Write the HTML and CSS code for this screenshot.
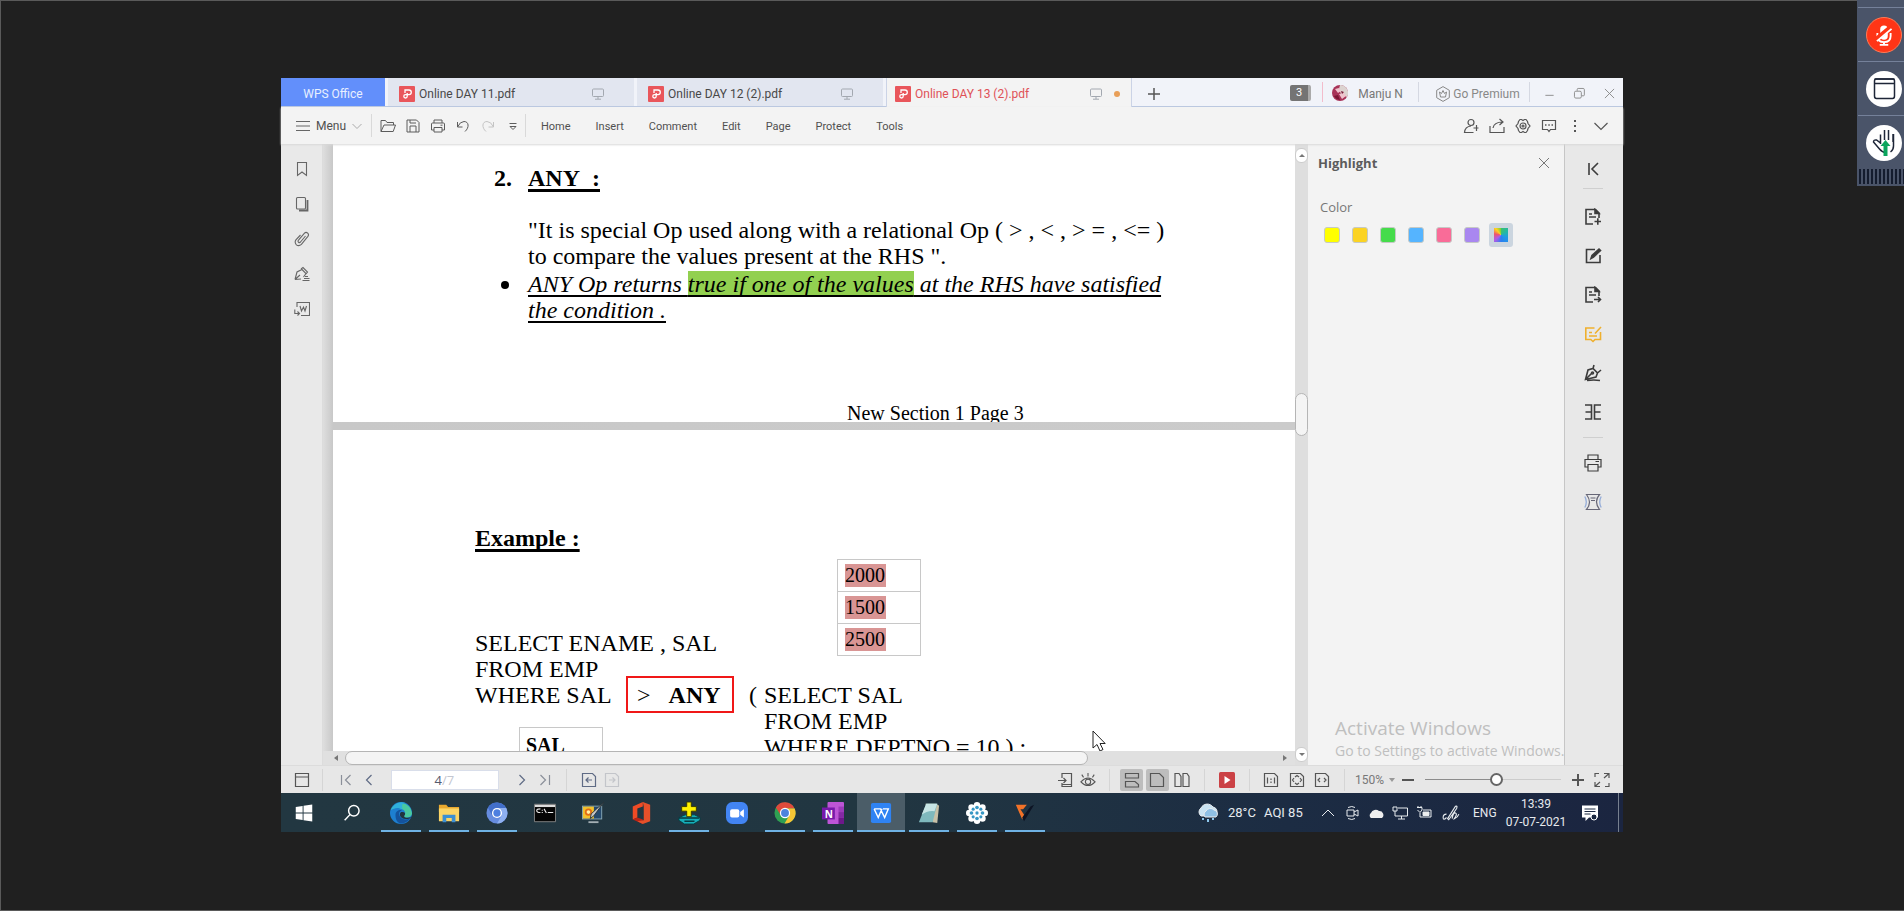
FILE: index.html
```html
<!DOCTYPE html>
<html lang="en">
<head>
<meta charset="utf-8">
<title>Online DAY 13 (2).pdf - WPS Office</title>
<link rel="stylesheet" href="styles.css">
</head>
<body>
<div class="stage">
<div class="desktop">

<header class="tabbar">
  <button class="home-tab">WPS Office</button>
  <button class="tab"><svg class="pdf" viewBox="0 0 16 16"><rect width="16" height="16" rx="1" fill="#e9565b"/><path d="M6 7V4h4a2.300 2.300 0 0 1 0 4.600H6.500a1.700 1.700 0 1 0 1.700 1.700V7" fill="none" stroke="#fff" stroke-width="1.300"/></svg><span>Online DAY 11.pdf</span><svg class="mon" viewBox="0 0 12 12"><rect x=".5" y="1" width="11" height="7.500" rx="1"/><path d="M6 8.500V11M3 11.200h6"/></svg></button>
  <button class="tab"><svg class="pdf" viewBox="0 0 16 16"><rect width="16" height="16" rx="1" fill="#e9565b"/><path d="M6 7V4h4a2.300 2.300 0 0 1 0 4.600H6.500a1.700 1.700 0 1 0 1.700 1.700V7" fill="none" stroke="#fff" stroke-width="1.300"/></svg><span>Online DAY 12 (2).pdf</span><svg class="mon" viewBox="0 0 12 12"><rect x=".5" y="1" width="11" height="7.500" rx="1"/><path d="M6 8.500V11M3 11.200h6"/></svg></button>
  <button class="tab active"><svg class="pdf" viewBox="0 0 16 16"><rect width="16" height="16" rx="1" fill="#e9565b"/><path d="M6 7V4h4a2.300 2.300 0 0 1 0 4.600H6.500a1.700 1.700 0 1 0 1.700 1.700V7" fill="none" stroke="#fff" stroke-width="1.300"/></svg><span>Online DAY 13 (2).pdf</span><svg class="mon" viewBox="0 0 12 12"><rect x=".5" y="1" width="11" height="7.500" rx="1"/><path d="M6 8.500V11M3 11.200h6"/></svg><i class="dot"></i></button>
  <button class="plus" aria-label="New tab"><svg width="12" height="12" viewBox="0 0 12 12"><path d="M6 0v12M0 6h12" stroke="#555" stroke-width="1.500"/></svg></button>
  <div class="account">
    <span class="count">3</span>
    <i class="sep pink"></i>
    <svg class="avatar" viewBox="0 0 16 16"><circle cx="8" cy="8" r="8" fill="#a83358"/><path d="M8 0a8 8 0 0 1 7 12L9 9 7 4z" fill="#dcd3d0"/><path d="M3 4l4-1 2 3-3 2zM7 9l5-1 2 3-4 3z" fill="#efc3cd"/><path d="M2 11l4-1 2 5a8 8 0 0 1-6-4zM9 6l3 1-2 2z" fill="#7b1734"/></svg>
    <button class="user">Manju N</button>
    <i class="sep"></i>
    <button class="premium"><svg width="14" height="16" viewBox="0 0 14 16" fill="none" stroke="#888"><path d="M7 .6l6.300 3.700v7.400L7 15.400.7 11.700V4.300z"/><path d="M3.500 6l1 5h5l1-5-2 1.500L7 4.500 5.500 7.500z"/></svg><span>Go Premium</span></button>
    <i class="sep"></i>
    <div class="winbtns">
      <button aria-label="Minimize"><svg viewBox="0 0 12 12"><path d="M1.500 8h9"/></svg></button>
      <button aria-label="Restore"><svg viewBox="0 0 12 12"><rect x=".5" y="3.500" width="7.500" height="7.500" rx="1.500"/><path d="M3.500 3V1.500q0-1 1-1H10q1.300 0 1.300 1.300V7.500q0 1-1 1H8.500"/></svg></button>
      <button aria-label="Close"><svg viewBox="0 0 12 12"><path d="M1 1l10 10M11 1L1 11"/></svg></button>
    </div>
  </div>
</header>

<div class="toolbar">
  <button class="menu"><svg width="14" height="12" viewBox="0 0 14 12"><path d="M0 1.500h14M0 6h14M0 10.500h14" stroke="#666"/></svg><span>Menu</span><svg width="10" height="8" viewBox="0 0 10 8"><path d="M.5 2L5 6.500 9.500 2" fill="none" stroke="#aaa"/></svg></button>
  <div class="quick">
    <button aria-label="Open"><svg viewBox="0 0 16 14"><path d="M1 12.500V1.500h4.500l1.500 2h6.500V6M1 12.500L4 6h11.500l-2.300 6.500z"/></svg></button>
    <button aria-label="Save"><svg viewBox="0 0 16 14"><path d="M2 1h9.500L14 3.500V13H2zM5 13V7h6v6M5 1v3h6"/></svg></button>
    <button aria-label="Print"><svg viewBox="0 0 16 14"><path d="M4 4V1h8v3M4 11H1.500V5q0-1 1-1h11q1 0 1 1v6H12M4 8.500h8V13H4zM10.500 6.200h2"/></svg></button>
    <button aria-label="Undo"><svg viewBox="0 0 16 14"><path d="M2.500 3v5h5M2.500 8Q5 2.500 9 2.500c5 0 5.500 6 1 10"/></svg></button>
    <button aria-label="Redo" class="off"><svg viewBox="0 0 16 14"><path d="M13.500 3v5h-5M13.500 8Q11 2.500 7 2.500c-5 0-5.500 6-1 10"/></svg></button>
    <button aria-label="More"><svg viewBox="0 0 16 14"><path d="M4.500 4.500h7M5 7.500l3 3 3-3z"/></svg></button>
  </div>
  <nav class="nav"><button>Home</button><button>Insert</button><button>Comment</button><button>Edit</button><button>Page</button><button>Protect</button><button>Tools</button></nav>
  <div class="tools">
    <button aria-label="Invite"><svg viewBox="0 0 16 16"><circle cx="8" cy="4.500" r="3"/><path d="M8 8q-6 .5-6.500 6.500h9M13.500 7v6M10.500 10h5"/></svg></button>
    <button aria-label="Share"><svg viewBox="0 0 16 16"><path d="M1 8v6.500h14V9M4 10q1-6 9.500-6M10.500 1l3.500 3-3.500 3"/></svg></button>
    <button aria-label="Settings"><svg viewBox="0 0 16 16"><path d="M5 1.500h1.500L8 2.500l1.500-1H11l1.500 2 .5 2 2 2.500-2 2.500-.5 2-1.500 2H9.500L8 13.500l-1.500 1H5l-1.500-2-.5-2L1 8l2-2.500.5-2z"/><circle cx="8" cy="8" r="3"/><circle cx="8" cy="8" r="1"/></svg></button>
    <button aria-label="Feedback"><svg viewBox="0 0 16 16"><path d="M1.500 2.500h13v9h-5L8 13.500l-1.500-2h-5z"/><path d="M4 7h1.500M7.300 7h1.500M10.500 7H12" stroke-width="1.500"/></svg></button>
    <button aria-label="More"><svg viewBox="0 0 16 16"><path d="M8 2v2M8 7v2M8 12v2" stroke-width="2"/></svg></button>
    <button aria-label="Collapse"><svg viewBox="0 0 16 16"><path d="M1.500 5L8 11.500 14.500 5"/></svg></button>
  </div>
</div>

<main class="work">
  <aside class="leftrail">
    <button aria-label="Bookmarks"><svg viewBox="0 0 16 16"><path d="M3.500 1.500h9v13L8 11l-4.500 3.500z"/></svg></button>
    <button aria-label="Thumbnails"><svg viewBox="0 0 16 16"><rect x="2.500" y="1.500" width="9" height="11.500" rx="1"/><path d="M5 14.500h8.500V4" stroke-width="1.800"/></svg></button>
    <button aria-label="Attachments"><svg viewBox="0 0 16 16"><path d="M11.500 5l-5 6q-1 1-2 .2-.9-1 0-2l6-7q1.500-1.500 3.200 0 1.500 1.500.2 3.200l-6.500 8q-2.500 2.300-5 .5-2.200-2.500-.5-5L6.500 4"/></svg></button>
    <button aria-label="Signatures"><svg viewBox="0 0 16 16"><path d="M1 13.500L3 6l5-2.500 4 4L9.500 11M1 13.500l6-.5M1.500 13L6 9M7 3l2-1.500L13.500 6l-1.500 2M11 10.500h3M10 12.500h5.500M8.500 14.500h7"/></svg></button>
    <button aria-label="Convert"><svg viewBox="0 0 16 16"><path d="M3 6V1.500h12.500v13H7M6 5l1.500 5L9.500 6l1.500 4L12.500 5M.8 8.500v4h4.500M3.500 10.500l2 2-2 2"/></svg></button>
  </aside>

  <section class="viewer">
    <div class="canvas">
      <article class="page one">
        <h2 class="item"><b>2.</b><u>ANY&nbsp; :</u></h2>
        <p class="quote">"It is special Op used along with a relational Op ( &gt; , &lt; , &gt; = , &lt;= )<br>to compare the values present at the RHS ".</p>
        <ul><li><u>ANY Op returns <mark>true if one of the values</mark> at the RHS have satisfied<br>the condition .</u></li></ul>
        <p class="footer">New Section 1 Page 3</p>
      </article>
      <article class="page two">
        <h2><u>Example :</u></h2>
        <div class="cols">
          <p class="sql">SELECT ENAME , SAL<br>FROM EMP</p>
          <table class="vals"><tr><td><span>2000</span></td></tr><tr><td><span>1500</span></td></tr><tr><td><span>2500</span></td></tr></table>
        </div>
        <div class="where">
          <p class="lhs">WHERE SAL</p>
          <p class="any"><span>&gt;</span><b>ANY</b></p>
          <p class="paren">(</p>
          <p class="sub">SELECT SAL<br>FROM EMP<br>WHERE DEPTNO = 10 ) ;</p>
          <table class="sal"><tr><th>SAL</th></tr></table>
        </div>
      </article>
      <svg class="cursor" width="14" height="22" viewBox="0 0 14 22"><path d="M1 1v17l4-3.500 3 6.500 3-1.500-3-6h5.200z" fill="#fff" stroke="#222"/></svg>
    </div>
    <div class="hscroll"><i class="arr l"></i><i class="hthumb"></i><i class="arr r"></i></div>
  </section>
  <div class="vscroll"><i class="cap up"></i><i class="vthumb"></i><i class="cap down"></i></div>

  <aside class="panel">
    <div class="panel-head"><h3>Highlight</h3><button aria-label="Close panel"><svg width="12" height="12" viewBox="0 0 12 12"><path d="M1 1l10 10M11 1L1 11" stroke="#777"/></svg></button></div>
    <p class="label">Color</p>
    <div class="swatches"><button class="c1" aria-label="Yellow"></button><button class="c2" aria-label="Amber"></button><button class="c3" aria-label="Green"></button><button class="c4" aria-label="Blue"></button><button class="c5" aria-label="Pink"></button><button class="c6" aria-label="Purple"></button><button class="c7" aria-label="Custom"><i></i></button></div>
    <div class="activate"><p>Activate Windows</p><small>Go to Settings to activate Windows.</small></div>
  </aside>

  <aside class="rightrail">
    <button class="first" aria-label="Expand"><svg viewBox="0 0 18 18"><path d="M5 3v12M14 3L8 9l6 6"/></svg></button>
    <hr>
    <button aria-label="Insert page"><svg viewBox="0 0 18 18"><path d="M9 16H2V1.500h9.500L15 5v5M5 6h3M5 9h7M10.500 13.500h6.500M13.800 10.300v6.500"/><path d="M11 1.500V5.500h4z" fill="#3c3c3c"/></svg></button>
    <button aria-label="Edit"><svg viewBox="0 0 18 18"><path d="M11 2.500H2.500v13H16V8"/><path d="M7 11.500l1-3L15 2l1.500 1.500L9.500 10z" fill="#333"/></svg></button>
    <button aria-label="Export"><svg viewBox="0 0 18 18"><path d="M9 16H2V1.500h9.500L15 5v5M5 6h3M5 9h7M10 13.500h6.500M14 11l2.500 2.500L14 16"/><path d="M11 1.500V5.500h4z" fill="#3c3c3c"/></svg></button>
    <button class="gold" aria-label="Annotate"><svg viewBox="0 0 18 18"><path d="M10.500 3H1.800v11.500h5L9 16.500l2-2h5.500V7M5 7.500h3M5 11h8M11 8.500L17 2"/></svg></button>
    <button aria-label="Sign"><svg viewBox="0 0 18 18"><path d="M1.500 15.500L4 6l5-1.500 4.500 4.500L12 13zM1.500 15.500l6-6M10 1l-1 3.500M17 6l-3.500 3M3 16.500q7-1 13 0"/><circle cx="8.500" cy="9" r="1"/></svg></button>
    <button aria-label="Split"><svg viewBox="0 0 18 18"><path d="M1 2h6.500v14H1M1.500 9h6M17 2h-6.500v14H17M10.500 9h6"/></svg></button>
    <hr class="second">
    <button aria-label="Print"><svg viewBox="0 0 18 18"><path d="M4 5V1h10v4M4 13H1V5.500h16V13h-3M4 10.500h10V17H4zM11.500 7.500h3.500" stroke-width="1.200"/></svg></button>
    <button aria-label="Compress"><svg viewBox="0 0 18 18"><path d="M2.500 1.500h13q-6 7 0 15h-13q6-7 0-15zM6.500 5h5M7 7.500h4" stroke="#667" stroke-width="1.200"/><path d="M.8 3.500q3 5.500 0 11M17.200 3.500q-3 5.500 0 11" stroke="#94acd8" stroke-width="1.300"/></svg></button>
  </aside>
</main>

<footer class="status">
  <div class="st-nav">
    <button class="boxed" aria-label="Sidebar"><svg viewBox="0 0 16 16"><path d="M1.500 1.500h13v13h-13zM1.500 5h13"/></svg></button>
    <button class="inset" aria-label="First page"><svg viewBox="0 0 16 16"><path d="M3.500 3v10M12.500 3l-5 5 5 5"/></svg></button>
    <button class="dark prev" aria-label="Previous page"><svg viewBox="0 0 16 16"><path d="M10.500 3l-5 5 5 5"/></svg></button>
    <label class="pageno"><input aria-label="Page" value="4"><span>/7</span></label>
    <button class="dark inset" aria-label="Next page"><svg viewBox="0 0 16 16"><path d="M5.500 3l5 5-5 5"/></svg></button>
    <button aria-label="Last page"><svg viewBox="0 0 16 16"><path d="M3.500 3l5 5-5 5M12.500 3v10"/></svg></button>
    <button class="dark ruled" aria-label="Back"><svg viewBox="0 0 16 16"><path d="M1.500 1.500h10l3 3v10h-13zM5 8h6M7.500 5.500L5 8l2.500 2.500"/></svg></button>
    <button class="off" aria-label="Forward"><svg viewBox="0 0 16 16"><path d="M1.500 1.500h10l3 3v10h-13zM5 8h6M8.500 5.500L11 8l-2.500 2.500"/></svg></button>
  </div>
  <div class="st-view">
    <button aria-label="Send to phone"><svg viewBox="0 0 16 16"><path d="M5 6V1.500h9.500v13H5V11M1 8.500h8M6.500 6L9 8.500 6.500 11M5 12.500h9"/></svg></button>
    <button aria-label="Eye care"><svg viewBox="0 0 18 16"><path d="M1 10q8-8.500 16 0-8 8.500-16 0zM9 0v4M2 2l2 3M16 2l-2 3"/><circle cx="9" cy="10" r="3"/></svg></button>
    <i></i>
    <button class="sel" aria-label="Continuous"><svg viewBox="0 0 16 16"><path d="M1.500 1.500h13V6h-13zM1.500 15V9.500H11l3.500 3V15z"/></svg></button>
    <button class="sel" aria-label="Single page"><svg viewBox="0 0 16 16"><path d="M1.500 1.500h9l4 4v9h-13z"/></svg></button>
    <button aria-label="Two pages"><svg viewBox="0 0 16 16"><path d="M1 1.500h4l2 3v10H1zM9 1.500h4l2 3v10H9z"/></svg></button>
    <i></i>
    <button class="play" aria-label="Play"><svg viewBox="0 0 16 16"><rect width="16" height="16" rx="1.500" fill="#cb4145" stroke="none"/><path d="M5.500 4v8l6-4z" fill="#fff" stroke="none"/></svg></button>
    <i></i>
    <button aria-label="Actual size"><svg viewBox="0 0 16 16"><path d="M1.500 1.500h10l3 3v10h-13zM4.500 5.500v6M11.500 5.500v6M8 6.500V8M8 9.500V11"/></svg></button>
    <button aria-label="Fit page"><svg viewBox="0 0 16 16"><path d="M1.500 1.500h10l3 3v10h-13zM6 5l2-1.500L10 5M6 11l2 1.500 2-1.500M5 6L3.500 8 5 10M11 6l1.500 2L11 10"/></svg></button>
    <button aria-label="Fit width"><svg viewBox="0 0 16 16"><path d="M1.500 1.500h10l3 3v10h-13zM6 6L4 8l2 2M10 6l2 2-2 2"/></svg></button>
    <i></i>
    <button class="zoom">150%<b></b></button>
    <button aria-label="Zoom out"><svg viewBox="0 0 16 16"><path d="M2 8h12" stroke-width="2"/></svg></button>
    <input class="slider" type="range" min="0" max="100" value="53" aria-label="Zoom">
    <button aria-label="Zoom in"><svg viewBox="0 0 16 16"><path d="M2 8h12M8 2v12" stroke-width="2"/></svg></button>
    <button aria-label="Full screen"><svg viewBox="0 0 16 16"><path d="M1 5V1.500h4M10 1.500h5V6M15 1.500L10 6M1 10v4.500h5M1 14.500L6 10M15 11v3.500h-4"/></svg></button>
  </div>
</footer>

<footer class="taskbar">
  <div class="apps">
    <button class="start" aria-label="Start"><svg viewBox="0 0 24 24"><path d="M3 5.500l7.500-1.200v7.200H3zM11.500 4.100L21 2.700v8.800h-9.500zM3 12.500h7.500v7.200L3 18.500zM11.500 12.500H21v8.800l-9.500-1.400z" fill="#fff"/></svg></button>
    <button class="search" aria-label="Search"><svg viewBox="0 0 24 24" fill="none" stroke="#fff" stroke-width="1.600"><circle cx="14" cy="9.500" r="5.700"/><path d="M10 13.500L4 20"/></svg></button>
    <button class="run" aria-label="Edge"><svg viewBox="0 0 24 24"><circle cx="12" cy="12" r="12" fill="#1d7fd0"/><path d="M1 8.500A12 12 0 0 1 24 12c0 4-4.500 6-8 4.500-2-1 1-2 .5-5C15.500 6.500 6 5 1 8.500z" fill="#49c9a0"/><path d="M2 7A11.500 11.500 0 0 1 17 1.200c-6 .8-3 5-3.500 7C10 6 5 6 1 9z" fill="#2fb0dc"/><path d="M6 14c0-4 4-6 7-5-3 1-4 4-2 7s6 4 11 2q-5 6-11 5.500C7 22 6 18 6 14z" fill="#14539d"/><path d="M12 11q-3 3.500 1 6.500 3 2 8.500.5l2-2q-4 2-7.500.5-1.500-1 .3-2.500 1-4-4.300-3z" fill="#21353f"/></svg></button>
    <button class="run" aria-label="File Explorer"><svg viewBox="0 0 24 24"><path d="M1 3h8l2 2.500h12V11H1z" fill="#e9a92f"/><path d="M1 7h22v14H1z" fill="#fcd566"/><path d="M5 14h14v8h-4v-4.500H9V22H5z" fill="#3c8fd3"/></svg></button>
    <button class="run" aria-label="Chromium"><svg viewBox="0 0 24 24"><circle cx="12" cy="12" r="11.500" fill="#668cdf"/><path d="M12 6.500h10A11.500 11.500 0 0 1 12 23.500L17 15z" fill="#8eb0f0"/><path d="M2 6A11.500 11.500 0 0 1 22 6.500H12L7 15z" fill="#426fca"/><circle cx="12" cy="12" r="5.500" fill="#fff"/><circle cx="12" cy="12" r="4" fill="#4d7fe0"/></svg></button>
    <button aria-label="Command Prompt"><svg viewBox="0 0 24 24"><path d="M.5 2.500h23v19H.5z" fill="#050505" stroke="#888"/><path d="M1 3h22v2.500H1z" fill="#ddd"/><path d="M7 7.500Q3 7.500 3 9.500t4 2M9 8.500v1M9 11v1M11 7.500l2.500 4.500M15 11.500h6" stroke="#eee" stroke-width="1.200" fill="none"/></svg></button>
    <button aria-label="Paint"><svg viewBox="0 0 24 24"><path d="M0 4h22v15H0z" fill="#89a9b5"/><path d="M1 5h20v13H1z" fill="#25496c"/><path d="M1 5h12v13H1z" fill="#f1c12d"/><circle cx="7" cy="11" r="4" fill="#e26d16"/><circle cx="7" cy="11" r="2" fill="#fff1a4"/><path d="M24 0L13 15l-4 3 1-5z" fill="#c6c6c6" stroke="#283339"/><path d="M7 21h11v2H7z" fill="#a4afb4"/></svg></button>
    <button aria-label="Office"><svg viewBox="0 0 24 24"><path d="M3 5l11-5v5L8 7v10L3 19z" fill="#ef4b25"/><path d="M3 19l5-2 6 2v5z" fill="#bb2315"/><path d="M14 0l8 3v18l-8 3-6-3 7-1V5z" fill="#e6502a"/></svg></button>
    <button class="run" aria-label="Database tool"><svg viewBox="0 0 24 24"><path d="M1 17l7-3h10l6 3v3l-7 4H7l-6-4z" fill="#16aeb9" stroke="#053e43"/><path d="M1 17.500h22M7 21h11" stroke="#063a40" stroke-width="1.500"/><path d="M9.500 0h5v5H20v5h-5.500v6h-5v-6H4V5h5.500z" fill="#fff200" stroke="#343600"/></svg></button>
    <button aria-label="Zoom"><svg viewBox="0 0 24 24"><rect width="24" height="24" rx="7" fill="#4285f4"/><rect x="4.500" y="8" width="10" height="9" rx="2" fill="#fff"/><path d="M15.500 11l4-3v9l-4-3z" fill="#fff"/></svg></button>
    <button class="run" aria-label="Chrome"><svg viewBox="0 0 24 24"><circle cx="12" cy="12" r="11.500" fill="#2fa052"/><path d="M2 6A11.500 11.500 0 0 1 22.400 7H12L7.500 14.500z" fill="#df4a3c"/><path d="M12 7h10.500A11.500 11.500 0 0 1 11.500 23.500L16.500 15z" fill="#f6c635"/><circle cx="12" cy="12" r="5.600" fill="#fff"/><circle cx="12" cy="12" r="4.300" fill="#4d83dd"/></svg></button>
    <button class="run" aria-label="OneNote"><svg viewBox="0 0 24 24"><rect x="6" width="18" height="24" rx="1" fill="#bd55d6"/><path d="M18 5h6v6h-6z" fill="#9d3bbb"/><path d="M18 11h6v6h-6z" fill="#8429a4"/><path d="M18 17h6v7h-6z" fill="#6d188b"/><rect y="6" width="14" height="13" fill="#7719aa"/><text x="3" y="17" class="n">N</text></svg></button>
    <button class="run now" aria-label="WPS Office"><svg viewBox="0 0 24 24"><rect x="1" y="1" width="22" height="22" rx="2" fill="#2f83f3"/><path d="M4.500 7.500h7L14 13M4.500 7.500L9 17l4-9.500M14 13l2 4 4-9.500h-6" fill="none" stroke="#fff" stroke-width="1.500"/></svg></button>
    <button class="run" aria-label="Notepad"><svg viewBox="0 0 24 24"><path d="M8 2h12l3 2-2 19-5-1z" fill="#c8c1a7"/><path d="M9 2h12l-5 20H1z" fill="#7fb9bd"/><path d="M9 2h12l-3 8Q10 9 4 14z" fill="#c7e5e5"/></svg></button>
    <button class="run" aria-label="GoTo"><svg viewBox="0 0 24 24"><g fill="#fff"><circle cx="12" cy="12" r="9"/><circle cx="12" cy="3.500" r="3.500"/><circle cx="12" cy="20.500" r="3.500"/><circle cx="3.500" cy="12" r="3.500"/><circle cx="20.500" cy="12" r="3.500"/><circle cx="6" cy="6" r="3.500"/><circle cx="18" cy="6" r="3.500"/><circle cx="6" cy="18" r="3.500"/><circle cx="18" cy="18" r="3.500"/></g><g fill="#3797c4"><circle cx="12" cy="6" r="2"/><circle cx="12" cy="18" r="2"/><circle cx="6" cy="12" r="2"/><circle cx="18" cy="12" r="2"/><circle cx="7.800" cy="7.800" r="1.700"/><circle cx="16.200" cy="7.800" r="1.700"/><circle cx="7.800" cy="16.200" r="1.700"/><circle cx="16.200" cy="16.200" r="1.700"/><circle cx="12" cy="12" r="1.800"/></g></svg></button>
    <button class="run" aria-label="Editor"><svg viewBox="0 0 24 24"><path d="M2 3h12l-4 5H7l4 6-2 5z" fill="#f27228"/><path d="M22 3l-4 2-9 12 2 4z" fill="#0d1424"/></svg></button>
  </div>
  <div class="tray">
    <svg width="24" height="20" viewBox="0 0 24 20"><path d="M5 13a5 5 0 0 1 0-8 7 7 0 0 1 12-1 5 5 0 0 1 2 9z" fill="#c9e3f2"/><path d="M9 14a4 4 0 0 1 1-6 5 5 0 0 1 8-1 4 4 0 0 1 2 7z" fill="#8fc0e4"/><path d="M7 15v2M12 16v3M17 15v2" stroke="#8ec8ee" stroke-width="2"/></svg>
    <span class="temp">28°C</span><span class="temp">AQI 85</span>
    <svg width="16" height="16" viewBox="0 0 16 16"><path d="M2 11l6-6 6 6"/></svg>
    <svg width="16" height="16" viewBox="0 0 16 16"><path d="M3 5h7v6H3zM10 7l4-2v6l-4-2M4 2.500q4-2 7 0M4 13.500q4 2 7 0"/></svg>
    <svg width="16" height="16" viewBox="0 0 16 16"><path d="M3 13a3 3 0 0 1 0-5 5 5 0 0 1 8-2 4 4 0 0 1 3 7z" fill="#eee" stroke="none"/></svg>
    <svg width="16" height="16" viewBox="0 0 16 16"><path d="M6 3h9.500v8H3V8M6 14h7M9.500 11v3M1 2h4v4H1zM3 6v2"/></svg>
    <svg width="16" height="16" viewBox="0 0 16 16"><path d="M4 8v4h11V5H7M1 2.500h5V5L4 7.500 1.500 5M2 1v1.500M5 1v1.500"/><path d="M7 7h6v3.500H7z" fill="#eee"/></svg>
    <svg width="18" height="18" viewBox="0 0 16 16"><path d="M4 12q-3 3-3 0t3-3M5 13l7-11q2-1 1 2L6 14zM9 13q1-6 3-5t-1 5q3-1 4-4"/></svg>
    <span>ENG</span>
    <p class="clock">13:39<br>07-07-2021</p>
    <svg width="18" height="18" viewBox="0 0 18 18"><path d="M1 1.500h16v12H8L4.500 17v-3.500H1z" fill="#fff" stroke="none"/><path d="M3.500 5h11M3.500 7.500h11M3.500 10h6" stroke="#1b2841"/><circle cx="13" cy="13" r="3" stroke="#fff" fill="#1b2841"/></svg>
    <i class="edge"></i>
  </div>
</footer>

</div>
</div>

<aside class="dock">
  <button class="mic" aria-label="Unmute"><svg viewBox="0 0 36 36"><path d="M14 12a4 4 0 0 1 8 0v7a4 4 0 0 1-8 0z" fill="#fff"/><path d="M11 16v3q0 6.500 7 6.500t7-6.500v-3M18 25v3M13.500 28.500h9" stroke="#fff" stroke-width="2" fill="none"/><path d="M9 23L25 10" stroke="#ff3516" stroke-width="5"/><path d="M10.500 24.500L26 11.500" stroke="#fff" stroke-width="2"/></svg></button>
  <button aria-label="Window"><svg viewBox="0 0 36 36" fill="none" stroke="#1e2638" stroke-width="1.500"><path d="M8.500 12.500V10q0-2 2-2h16q2 0 2 2v15q0 2.500-2 2.500h-16q-2 0-2-2.500z"/><path d="M8.500 8h20M9 12.500h19" /></svg></button>
  <button aria-label="Raise hand"><svg viewBox="0 0 36 36" fill="none" stroke="#1e2638" stroke-width="1.500"><path d="M14.500 19V9.500M14.500 18l-4-3q-3-.5-3 2l6 7q3 3.500 6 3.500M27.500 9v12q0 4-3 6M18.500 5v10M22.500 5v10M27 9v8"/><path d="M19.500 15l5 6h-3v10h-4V21h-3z" fill="#0ba55d" stroke="none"/></svg></button>
  <i class="grip"></i>
</aside>
</body>
</html>
```
FILE: styles.css
```css
* { box-sizing: border-box; }
body { margin: 0; background: #202020; font-family: "Open Sans", "Noto Sans", sans-serif; font-size: 12px; color: #555; }
p, h2, h3 { margin: 0; font-weight: normal; font-size: inherit; }
button { margin: 0; padding: 0; border: 0; background: none; font: inherit; color: inherit; display: flex; align-items: center; justify-content: center; }
svg { display: block; flex: none; }
i { display: block; flex: none; }

.stage { height: 100vh; min-height: 600px; padding: 77px 281px 78px 280px; border: 1px solid #5a5a5a; border-right: 0; }
.desktop { height: 100%; display: flex; flex-direction: column; background: #f3f3f3; }

/* title tabs */
.tabbar { height: 29px; flex: none; display: flex; background: #f1f3f9; border-bottom: 1px solid #b9c6e0; font-family: Roboto, "Open Sans", sans-serif; }
.tabbar button { padding-top: 3px; }
.home-tab { width: 104px; background: #628ffb; color: #e8efff; margin-right: 3px; }
.tabbar .tab { width: 246px; margin-right: 3px; padding: 3px 30px 0 11px; gap: 4px; background: #e2e6f0; color: #484848; justify-content: flex-start; }
.tab span { flex: 1; text-align: left; white-space: nowrap; }
.tab .pdf { width: 16px; height: 16px; }
.tab .mon { width: 12px; height: 12px; fill: none; stroke: #a3a8b0; }
.tabbar .active { height: 29px; background: #f3f3f3; color: #df5157; border: solid #cbd3e6; border-width: 0 1px; padding: 2px 11px 0 8px; margin-right: 0; }
.dot { width: 6px; height: 6px; margin-left: 8px; border-radius: 3px; background: #e89f58; }
.plus { width: 44px; }
.account { margin-left: auto; display: flex; align-items: center; color: #777; }
.count { width: 21px; height: 16px; line-height: 16px; background: #747474; border-right: 3px solid #aaa; color: #fff; text-align: center; font-size: 11px; border-radius: 2px; margin-top: 2px; }
.sep { width: 1px; height: 20px; background: #d5d8e2; }
.sep.pink { background: #f3bccb; margin: 0 9px 0 11px; }
.avatar { width: 16px; height: 16px; margin: 2px 10px 0 0; }
.user { width: 45px; margin-right: 15px; white-space: nowrap; }
.premium { width: 82px; gap: 3px; margin: 0 10px 0 18px; white-space: nowrap; color: #888; }
.winbtns { display: flex; padding-left: 5px; }
.winbtns button { width: 32px; }
.winbtns button:first-child { width: 28px; }
.winbtns button:last-child { width: 28px; }
.winbtns svg { width: 11px; height: 11px; fill: none; stroke: #888; overflow: visible; }

/* toolbar */
.toolbar { height: 37px; flex: none; display: flex; align-items: center; font-family: Roboto, "Open Sans", sans-serif; font-size: 11px; box-shadow: 0 1px 2px #d8d8d8; z-index: 1; color: #505050; }
.menu { width: 91px; height: 23px; padding-left: 15px; gap: 6px; justify-content: flex-start; border-right: 1px solid #d9d9d9; font-size: 12px; }
.menu span { width: 30px; }
.quick { display: flex; padding-left: 3px; height: 23px; border-right: 1px solid #d9d9d9; }
.quick button { width: 25px; }
.quick svg { width: 16px; height: 14px; fill: none; stroke: #5c5c5c; }
.quick .off svg { stroke: #c4c4c4; }
.nav { display: flex; gap: 25px; padding: 1px 0 0 15px; }
.tools { margin-left: auto; display: flex; padding-right: 9px; }
.tools button { width: 26px; }
.tools svg { width: 16px; height: 16px; fill: none; stroke: #555; stroke-width: 1.2; }

/* work area */
.work { flex: 1; min-height: 0; display: flex; }
.leftrail { width: 42px; flex: none; display: flex; flex-direction: column; background: #e9e9e9; padding: 7px 0 0; border-right: 1px solid #dcdcdc; }
.leftrail button { height: 35px; }
.leftrail svg { width: 16px; height: 16px; fill: none; stroke: #666; stroke-width: 1.1; }
.viewer { flex: 1; min-width: 0; display: flex; flex-direction: column; background: #ddd; }
.canvas { flex: 1; min-height: 0; position: relative; overflow: hidden; display: flex; flex-direction: column; gap: 8px; padding-left: 10px; background: linear-gradient(90deg, #dedede, #c8c8c8 10px, #cbcbcb); }
.page { background: #fff; color: #000; font-family: "Liberation Serif", serif; font-size: 24px; line-height: 26px; overflow: hidden; white-space: nowrap; }
.page u { text-underline-offset: 3px; text-decoration-thickness: 2px; text-decoration-skip-ink: none; }
.one { height: 278px; flex: none; padding: 21px 0 0 161px; }
.two { flex: 1; min-height: 0; padding: 95px 0 0 142px; }
h2 { font-weight: bold; }
.page h2 u { text-decoration-thickness: 3px; }
.item { display: flex; }
.item b { width: 34px; }
.quote { margin: 26px 0 0 34px; }
.one ul { margin: 2px 0 0; padding-left: 34px; font-style: italic; list-style: none; }
.one li { position: relative; }
.one li::before { content: ""; position: absolute; left: -27px; top: 10px; width: 8px; height: 8px; border-radius: 4px; background: #000; }
mark { background: #92d050; color: inherit; }
.footer { margin: 79px 0 0 353px; font-size: 20px; line-height: 22px; }
.cols { display: flex; margin-top: 8px; height: 117px; }
.cols .sql { width: 362px; padding-top: 71px; }
.vals, .sal { border-collapse: collapse; font-size: 20px; line-height: 22px; width: 84px; align-self: flex-start; }
.vals td { height: 32px; padding: 0 7px; border: 1px solid #c8c8c8; }
.vals span { display: inline-block; background: #d99594; height: 23px; padding-right: 1px; }
.where { display: grid; grid-template-columns: 151px 123px 15px 1fr; grid-template-rows: 51px auto; align-items: start; }
.lhs, .paren, .sub { padding-top: 6px; }
.any { width: 108px; height: 37px; border: 2px solid #f01818; display: flex; gap: 18px; padding: 4px 9px; }
.any b { display: block; }
.sub { grid-row: 1 / 3; grid-column: 4; }
.sal { grid-column: 1 / 3; grid-row: 2; margin-left: 44px; }
.sal th { border: 1px solid #c8c8c8; height: 32px; padding: 2px 6px 0; text-align: left; }
.cursor { position: absolute; left: 769px; bottom: -1px; }

.hscroll { height: 14px; flex: none; display: flex; align-items: center; padding: 0 8px 0 11px; background: #e0e0e0; }
.hthumb { width: 78%; height: 14px; border: 1px solid #b5b5b5; border-radius: 7px; background: #f4f4f4; margin: 0 auto 0 7px; }
.arr { border: 3px solid transparent; }
.arr.l { border-right: 4px solid #777; border-left: 0; }
.arr.r { border-left: 4px solid #777; border-right: 0; }
.vscroll { width: 13px; flex: none; display: flex; flex-direction: column; background: #dedede; padding: 4px 0 3px; }
.cap { height: 15px; border-radius: 6px; background: #fff; border: 1px solid #ccc; display: grid; place-items: center; }
.cap::before { content: ""; border: 3px solid transparent; }
.cap.up::before { border-bottom-color: #777; border-top: 0; }
.cap.down::before { border-top-color: #777; border-bottom: 0; }
.vthumb { height: 43px; margin: 230px 0 auto; border: 1px solid #b5b5b5; border-radius: 7px; background: #f4f4f4; }

.panel { width: 257px; flex: none; position: relative; border-right: 1px solid #c6c6c6; padding: 8px 14px 0 10px; }
.panel-head { display: flex; justify-content: space-between; align-items: center; height: 22px; }
.panel h3 { font-size: 13px; font-weight: bold; color: #5c5c5c; }
.label { margin: 22px 0 0 2px; font-size: 13px; line-height: 22px; color: #777; }
.swatches { display: flex; gap: 12px; margin: 5px 0 0 6px; align-items: center; height: 24px; }
.swatches button { width: 16px; height: 16px; flex: none; border: 1px solid #c5c9c5; border-radius: 3px; }
.c1 { background: #ff0; } .c2 { background: #fbd323; } .c3 { background: #45dc4b; } .c4 { background: #55b4ff; } .c5 { background: #f96c98; } .c6 { background: #a987f0; }
.swatches .c7 { width: 24px; height: 24px; margin-left: -3px; background: #cbd5df; border: 0; }
.c7 i { width: 14px; height: 14px; background: conic-gradient(#3fbf6b, #20b8a8 60deg, #1f97e8 120deg, #2b7df0 180deg, #b05be8 230deg, #f0546a 280deg, #ffd21f 320deg, #6fd03a); }
.activate { position: absolute; left: 27px; bottom: 5px; color: #bfbfbf; white-space: nowrap; z-index: 2; }
.activate p { font-size: 19px; line-height: 26px; }
.activate small { display: block; font-size: 14px; line-height: 19px; }

.rightrail { width: 58px; flex: none; background: #e8e8e8; display: flex; flex-direction: column; align-items: center; padding: 16px 2px 0 0; }
.rightrail button { height: 18px; margin-bottom: 21px; }
.rightrail .first { margin-bottom: 10px; }
.rightrail svg { width: 18px; height: 18px; fill: none; stroke: #3c3c3c; stroke-width: 1.6; }
.rightrail .gold svg { stroke: #efb02e; }
.rightrail hr { width: 20px; height: 1px; margin: 0 0 19px; border: 0; background: #cfcfcf; }
.rightrail .second { margin: -5px 0 16px; }

/* status bar */
.status { height: 28px; flex: none; display: flex; justify-content: space-between; background: #e7e7e7; border-top: 1px solid #dcdcdc; }
.status svg { width: 16px; height: 16px; fill: none; stroke: #8a8f99; stroke-width: 1.2; }
.st-nav { display: grid; grid-template-columns: 42px 34px 34px 108px 34px 24px 43px 24px; align-items: center; }
.st-nav > button { height: 22px; }
.st-nav .boxed { border-right: 1px solid #d5d5d5; }
.boxed svg { stroke: #555; }
.st-nav .inset { padding-left: 11px; }
.st-nav .prev { padding-right: 10px; }
.st-nav .dark svg { stroke: #5f6b85; }
.st-nav .off svg { stroke: #c3c5ca; }
.st-nav .ruled { border-left: 1px solid #d5d5d5; margin-left: 9px; padding-left: 10px; }
.pageno { height: 20px; display: flex; align-items: center; background: #fff; border: 1px solid #d9deea; font-size: 13px; color: #c3c6d0; }
.pageno input { width: 50px; padding: 0; border: 0; background: none; font: inherit; color: #555b6e; text-align: right; outline: 0; }
.st-view { display: grid; grid-template-columns: 22px 23px 20px 25px 26px 24px 20px 26px 18px 26px 25px 26px 18px 44px 22px 148px 22px 25px; align-items: center; padding-right: 9px; }
.st-view i { width: 1px; height: 22px; background: #d5d5d5; justify-self: center; }
.st-view svg { stroke: #555; }
.st-view button { height: 22px; }
.st-view .sel { width: 23px; background: #bdbdbd; border-radius: 2px; justify-self: center; }
.zoom { font-family: Roboto, sans-serif; font-size: 12px; gap: 5px; color: #777; }
.zoom b { border: 3px solid transparent; border-top: 4px solid #999; border-bottom: 0; }
.slider { appearance: none; width: 136px; height: 14px; margin: 0; justify-self: center; background: linear-gradient(90deg, #8c8c8c 53%, #ccc 53%) center / 100% 1px no-repeat; }
.slider::-webkit-slider-thumb { appearance: none; width: 13px; height: 13px; border: 2px solid #666; border-radius: 7px; background: #fff; }

/* Windows taskbar */
.taskbar { height: 39px; flex: none; display: flex; justify-content: space-between; background: linear-gradient(90deg, #223741, #213641 45%, #1c2c43 75%, #1b2540); color: #e6eaee; }
.apps { display: flex; }
.apps button { width: 48px; height: 39px; position: relative; }
.apps .start { width: 45px; }
.apps .search { width: 51px; }
.apps svg { width: 22px; height: 22px; overflow: visible; }
.n { font: bold 11px "Open Sans", sans-serif; fill: #fff; }
.apps .run::after { content: ""; position: absolute; left: 4px; right: 4px; bottom: 0; height: 2px; background: #6fb2e4; }
.apps .now { background: #4b5d68; }
.apps .now::after { left: 0; right: 0; }
.tray { display: grid; grid-template-columns: 32px 36px 56px 24px 24px 24px 24px 26px 31px 24px 84px 32px 10px; align-items: center; font-family: Roboto, "Open Sans", sans-serif; font-size: 12px; white-space: nowrap; }
.tray .temp { font-size: 13px; }
.tray svg { fill: none; stroke: #e8ecef; }
.clock { line-height: 18px; text-align: center; padding-right: 6px; }
.edge { width: 1px; height: 39px; background: #77808f; justify-self: center; }

/* floating call controls */
.dock { position: absolute; top: 0; right: 0; width: 47px; padding: 7px 0 2px 1px; background: #4a5469; overflow: hidden; }
.dock button { width: 46px; height: 54px; padding-left: 8px; border-top: 1px solid #75819a; justify-content: flex-start; }
.dock svg { width: 36px; height: 36px; border-radius: 18px; background: #fff; }
.dock .mic svg { background: #ff3516; border: 1px solid #ff7a55; }
.grip { height: 15px; margin-left: 1px; background: repeating-linear-gradient(90deg, #141c2e 0 2px, #4a5469 2px 4px); }
```
